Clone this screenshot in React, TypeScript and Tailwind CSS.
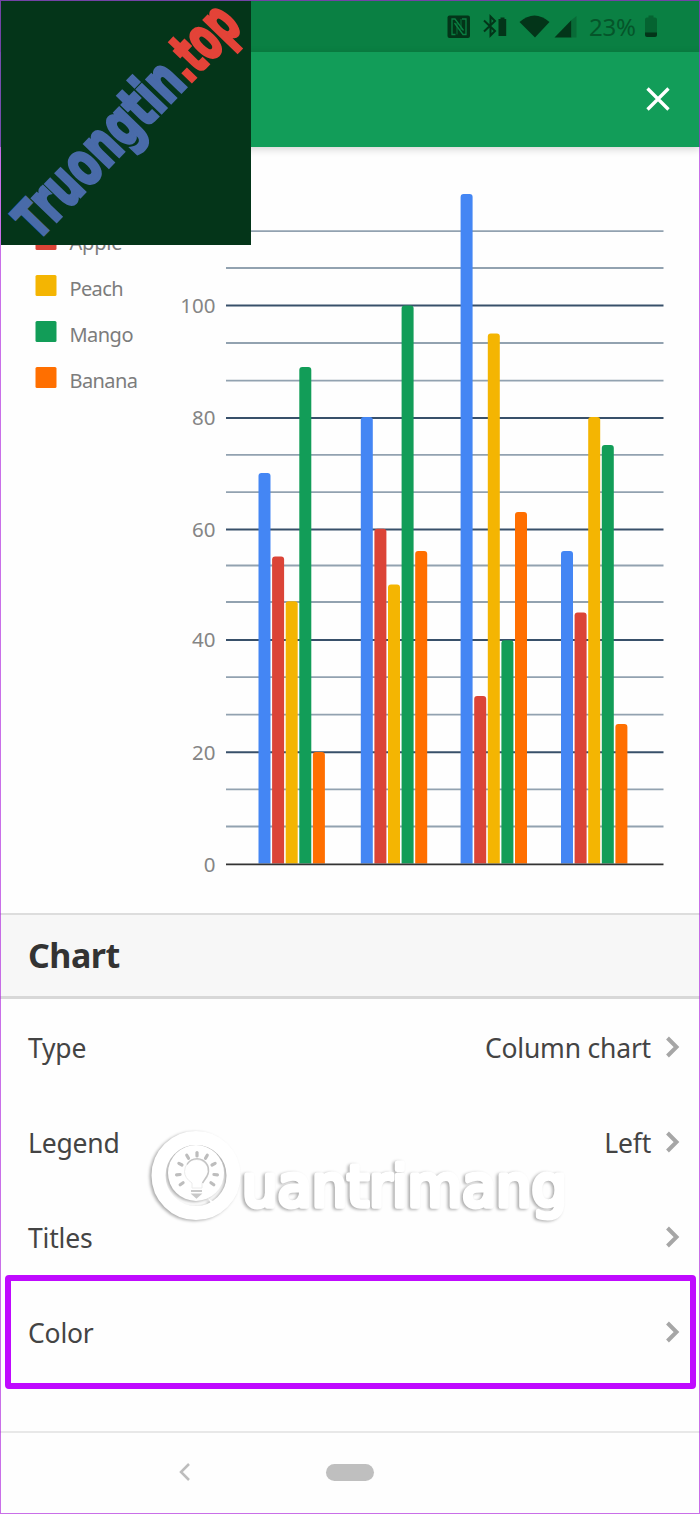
import React from 'react';

const SERIES = [
  { name: 'Blue', color: '#4486f4' },
  { name: 'Apple', color: '#db4437' },
  { name: 'Peach', color: '#f4b502' },
  { name: 'Mango', color: '#129d58' },
  { name: 'Banana', color: '#ff6f00' },
];

const GROUPS = [
  { x: 258.5, values: [70, 55, 47, 89, 20] },
  { x: 360.8, values: [80, 60, 50, 100, 56] },
  { x: 460.6, values: [120, 30, 95, 40, 63] },
  { x: 561, values: [56, 45, 80, 75, 25] },
];

const MAJOR = [
  { label: '20', y: 752.3 },
  { label: '40', y: 640 },
  { label: '60', y: 529.5 },
  { label: '80', y: 418 },
  { label: '100', y: 305.5 },
];

const MINOR = [826.5, 789.3, 714.6, 677.2, 602, 565.5, 492.2, 454.8, 380.6, 343, 268, 231.2];

const BASE = 863.5;
const UNIT = 5.58;

const OPTIONS = [
  { label: 'Type', value: 'Column chart' },
  { label: 'Legend', value: 'Left' },
  { label: 'Titles', value: '' },
  { label: 'Color', value: '' },
];

const barPath = (x: number, value: number) => {
  const top = BASE - value * UNIT;
  return `M${x} ${BASE}V${top + 3}q0 -3 3 -3h6q3 0 3 3V${BASE}z`;
};

const StatusBar: React.FC = () => (
  <div className="h-[52px] shrink-0 bg-[#0a8043]">
    <svg width="700" height="52" viewBox="0 0 700 52">
      <rect x="447.5" y="15.5" width="22.5" height="22.5" rx="2" fill="#033519" />
      <path
        d="M455.5 34.5h-3.500V19h3l8.500 11.500M462 19h4v15.500h-3l-8.500-11.500"
        fill="none"
        stroke="#0a8043"
        strokeWidth="1.3"
      />
      <path d="M457 23v11.500M461 19v11" fill="none" stroke="#0a8043" strokeWidth="0.8" />
      <g fill="#033519">
        <path d="M498.500 19h2v-1.500h4V19h1.700v17h-7.700V19z" />
        <path d="M519.500 22q15-13 30 0L535 37.500z" />
        <path d="M554.500 37.500L571.500 20v17.500z" />
      </g>
      <path d="M484 20.500l11 10.500-4.500 4.500V16.500l4.500 4.500L484 31.500" fill="none" stroke="#033519" strokeWidth="2" />
      <path d="M571.500 20l5-4v21.500h-5z" fill="#086b37" />
      <path d="M645 19.500q0-2 2-2h1.500v-2h5v2h1.500q2 0 2 2V33h-12z" fill="#056331" />
      <path d="M645 32.500h12V35q0 2-2 2h-8q-2 0-2-2z" fill="#033519" />
      <text x="589" y="35.5" fontSize="24" textLength="47" fill="#05552a" className="font-['Noto_Sans',sans-serif]">
        23%
      </text>
    </svg>
  </div>
);

const AppBar: React.FC = () => (
  <header className="flex h-[95px] shrink-0 items-center justify-end bg-[#129d59] pr-[30px] shadow-[0_2px_8px_rgba(0,0,0,0.18)]">
    <svg width="24" height="24" viewBox="0 0 24 24" className="-mt-0.5">
      <path d="M1.500 1.500l21 21M22.500 1.500l-21 21" stroke="#fff" strokeWidth="3.3" />
    </svg>
  </header>
);

const ColumnChart: React.FC = () => (
  <section className="h-[766px] shrink-0">
    <svg width="700" height="766" viewBox="0 147 700 766" className="font-['Noto_Sans',sans-serif]">
      {SERIES.slice(1).map((s, i) => (
        <g key={s.name}>
          <rect x="35.5" y={229 + i * 46} width="21" height="21" rx="1.5" fill={s.color} />
          <text
            x="69.5"
            y={249.5 + i * 46}
            fontSize="20"
            textLength={[53, 54, 64, 68.5][i]}
            fill="#7c7c7c"
          >
            {s.name}
          </text>
        </g>
      ))}
      {MINOR.map((y) => (
        <path key={y} d={`M226 ${y}h437.5`} stroke="#92a2b0" strokeWidth="1.8" />
      ))}
      {MAJOR.map((line) => (
        <g key={line.label}>
          <path d={`M226 ${line.y}h437.5`} stroke="#38506a" strokeWidth="2" />
          <text x="215.5" y={line.y + 7.2} fontSize="20.5" textAnchor="end" fill="#858585">
            {line.label}
          </text>
        </g>
      ))}
      {GROUPS.map((group) =>
        group.values.map((value, i) => (
          <path key={`${group.x}-${i}`} d={barPath(group.x + i * 13.6, value)} fill={SERIES[i].color} />
        ))
      )}
      <path d="M226 864.3h437.5" stroke="#333" strokeWidth="1.8" />
      <text x="215.5" y="871.5" fontSize="20.5" textAnchor="end" fill="#858585">
        0
      </text>
    </svg>
  </section>
);

const OptionList: React.FC = () => (
  <section className="flex h-[432px] shrink-0 flex-col pt-[2px]">
    {OPTIONS.map((option) => (
      <div
        key={option.label}
        className="flex h-[95px] shrink-0 items-center pl-7 pr-[20px] text-[26.5px] tracking-[-0.2px] text-[#444]"
      >
        <span className="flex-1">{option.label}</span>
        <span>{option.value}</span>
        <svg width="15" height="22" viewBox="0 0 15 22" className="-mt-[3px] ml-[14px]">
          <path d="M2.500 2l9 9-9 9" fill="none" stroke="#a6a6a6" strokeWidth="4" />
        </svg>
      </div>
    ))}
  </section>
);

const RAYS = [-125, -95, -62, -30, 0, 30, 62, 95, 125];

const Watermark: React.FC = () => (
  <svg
    width="440"
    height="110"
    viewBox="140 1120 440 110"
    className="absolute left-[140px] top-[1120px] drop-shadow-[-1.5px_1.5px_1.5px_rgba(0,0,0,0.32)]"
  >
    <circle cx="196" cy="1175.5" r="37.5" fill="none" stroke="#fff" strokeWidth="14" />
    <circle cx="196" cy="1173" r="28" fill="#fff" />
    <path d="M208 1198q6 6 9 1l5-6q1 8-1 12-2 5-6 5z" fill="#fff" />
    <g stroke="#bdbdbd" strokeWidth="3.2" strokeLinecap="round">
      {RAYS.map((angle) => (
        <path key={angle} d="M197 1156v-3.500" transform={`rotate(${angle} 197 1173)`} />
      ))}
    </g>
    <path
      d="M192 1188v-5q-7.500-5-7.500-11.500a12 12 0 0 1 24 0q0 6.500-6.500 11.500v5z"
      fill="#fff"
      stroke="#ececec"
      strokeWidth="1"
    />
    <path d="M187 1164.500a11.500 11.500 0 0 1 20 11.500l-4.500 7" fill="none" stroke="#c4c4c4" strokeWidth="1.5" />
    <path d="M191 1191h11M193 1194.500h7l-3.500 3z" fill="#c9c9c9" stroke="#c9c9c9" strokeWidth="1.8" />
    <text
      x="242"
      y="1205.5"
      fontSize="57"
      textLength="325"
      lengthAdjust="spacingAndGlyphs"
      fill="#fff"
      stroke="#fff"
      strokeWidth="5"
      strokeLinejoin="round"
      className="font-['DejaVu_Sans',sans-serif]"
    >
      uantrimang
    </text>
  </svg>
);

const SiteBadge: React.FC = () => (
  <svg width="250" height="244" viewBox="1 1 250 244" className="absolute left-px top-px bg-[#043519]">
    <g
      transform="translate(37.5 241) rotate(-46)"
      fontSize="61"
      strokeWidth="3.2"
      className="font-['DejaVu_Sans_Condensed','DejaVu_Sans',sans-serif] font-bold"
    >
      <text textLength="217" lengthAdjust="spacingAndGlyphs" fill="#496ba9" stroke="#496ba9">
        <tspan fontSize="53">T</tspan>
        <tspan>ruongtin</tspan>
      </text>
      <text x="218" textLength="78" lengthAdjust="spacingAndGlyphs" fill="#e34338" stroke="#e34338">
        .top
      </text>
    </g>
  </svg>
);

const App: React.FC = () => {
  return (
    <main className="relative flex h-[1514px] w-[700px] flex-col overflow-hidden bg-[#fefefe] font-['Noto_Sans',sans-serif]">
      <StatusBar />
      <AppBar />
      <ColumnChart />
      <div className="flex h-[86px] shrink-0 items-center border-b-[3px] border-t-2 border-b-[#d8d8d8] border-t-[#dddddd] bg-[#f7f7f7] pb-0.5 pl-7">
        <h2 className="text-[34px] font-bold leading-none tracking-[-0.5px] text-[#333]">Chart</h2>
      </div>
      <OptionList />
      <nav className="flex flex-1 items-center border-t-2 border-[#e8e8e8] pb-[3px] pl-[178px]">
        <svg width="14" height="20" viewBox="0 0 14 20">
          <path d="M11 2l-8 8 8 8" fill="none" stroke="#bdbdbd" strokeWidth="2.5" />
        </svg>
        <span className="ml-[134px] h-[17px] w-12 rounded-full bg-[#bfbfbf]" />
      </nav>

      <Watermark />
      <div className="absolute left-[5px] top-[1275px] h-[114px] w-[691px] rounded-[4px] border-[6px] border-[#bf0aff]" />
      <SiteBadge />
      <div className="pointer-events-none absolute inset-0 border border-[rgba(172,34,219,0.65)]" />
    </main>
  );
};

export default App;
